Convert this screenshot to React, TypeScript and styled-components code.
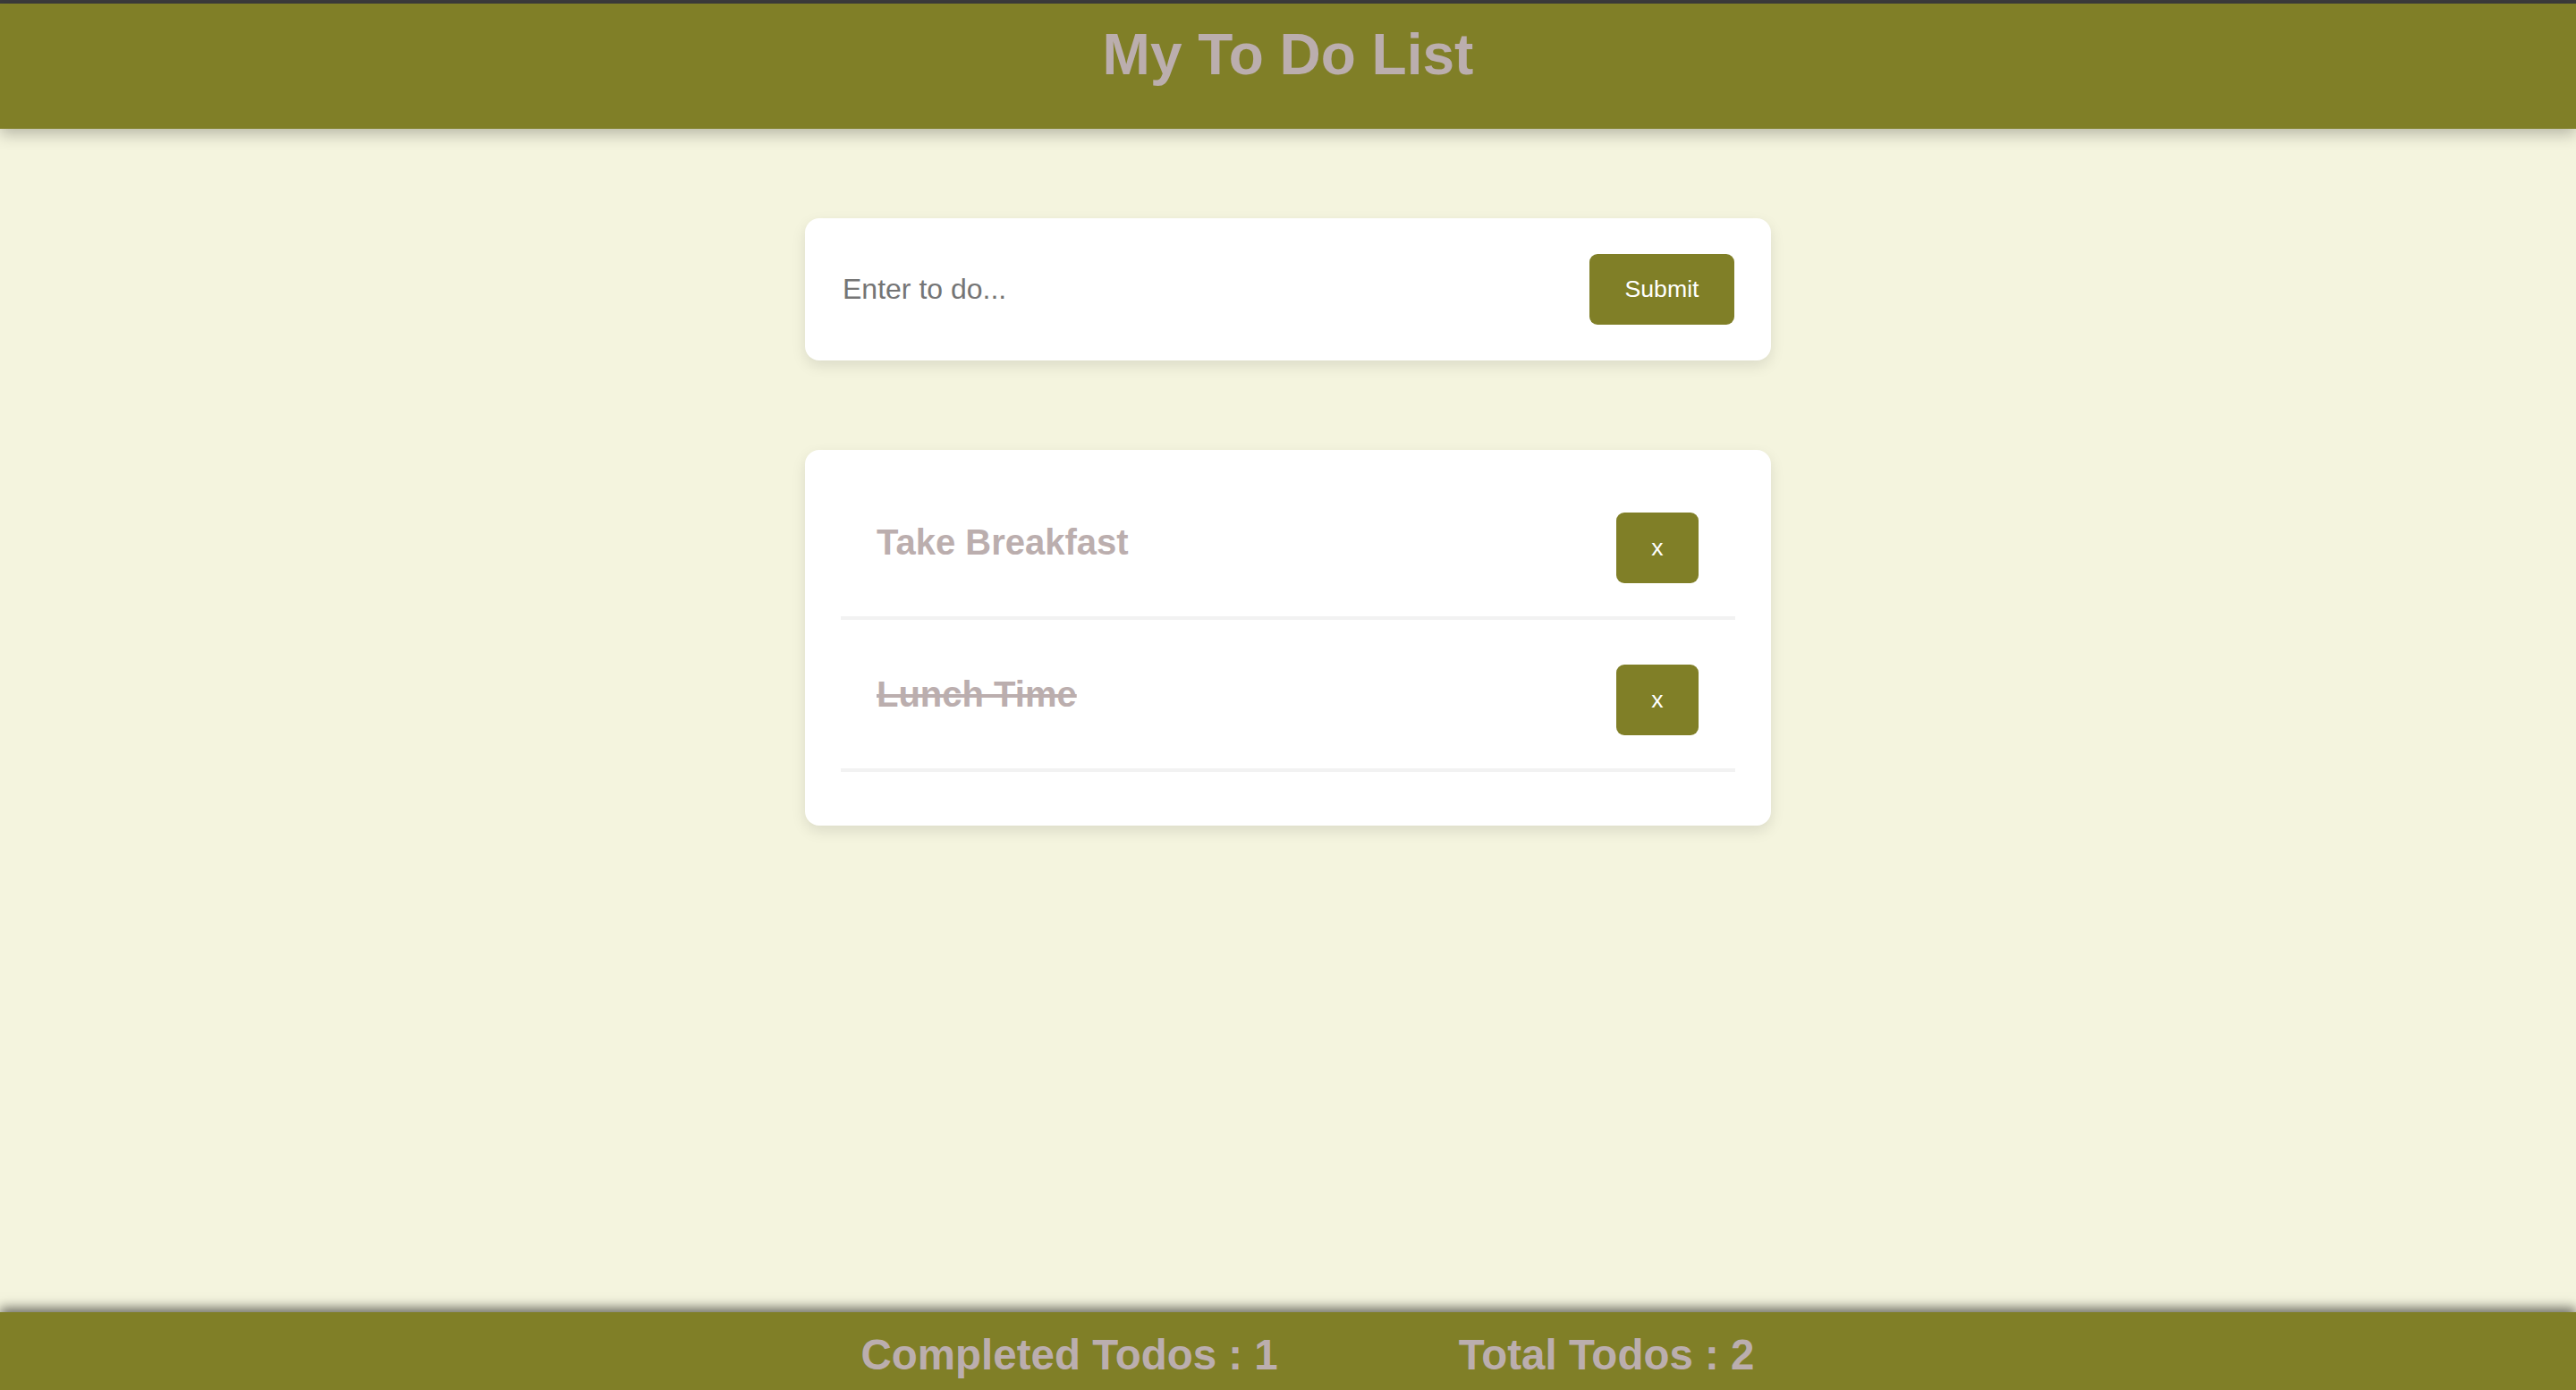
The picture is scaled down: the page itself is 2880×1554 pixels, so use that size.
import React from "react";
import styled, { createGlobalStyle } from "styled-components";

const GlobalStyle = createGlobalStyle`
  html, body {
    margin: 0;
    padding: 0;
    background: #f4f4de;
    font-family: "Liberation Sans", Arial, Helvetica, sans-serif;
  }
  * { box-sizing: border-box; }
`;

const olive = "#807f27";
const muted = "#bbaeae";

const Page = styled.div`
  min-height: 1554px;
  display: flex;
  flex-direction: column;
  border-top: 4px solid #3c3c3c;
  background: #f4f4de;
`;

const Header = styled.header`
  height: 140px;
  background: ${olive};
  display: flex;
  justify-content: center;
  align-items: flex-start;
  padding-top: 20px;
  box-shadow: 0 6px 16px rgba(0, 0, 0, 0.25);
  position: relative;
  z-index: 1;
`;

const Title = styled.h1`
  margin: 0;
  font-size: 64px;
  line-height: 74px;
  font-weight: 700;
  color: ${muted};
`;

const Main = styled.main`
  flex: 1;
  display: flex;
  flex-direction: column;
  align-items: center;
  gap: 100px;
  padding-top: 100px;
`;

const Card = styled.div`
  width: 1080px;
  background: #ffffff;
  border-radius: 16px;
  box-shadow: 0 6px 16px rgba(0, 0, 0, 0.1);
`;

const FormCard = styled(Card).attrs({ as: "form" })`
  display: flex;
  align-items: center;
  justify-content: space-between;
  padding: 40px 41px 40px 42px;
`;

const Input = styled.input`
  flex: 1;
  border: none;
  outline: none;
  background: transparent;
  font-family: "Liberation Sans", Arial, sans-serif;
  font-size: 32px;
  color: #333;
  padding: 0;
  &::placeholder {
    color: #757575;
  }
`;

const Button = styled.button<{ $wide?: boolean }>`
  border: none;
  border-radius: 9px;
  background: ${olive};
  color: #ffffff;
  font-family: "Liberation Sans", Arial, sans-serif;
  font-size: 26.67px;
  line-height: 31px;
  height: 79px;
  width: ${(p) => (p.$wide ? "162px" : "92px")};
  padding: 0;
  cursor: pointer;
`;

const ListCard = styled(Card)`
  padding: 20px 40px 60px;
`;

const List = styled.ul`
  list-style: none;
  margin: 0;
  padding: 0;
`;

const Item = styled.li`
  display: flex;
  justify-content: space-between;
  align-items: flex-start;
  padding: 50px 41px 37px 40px;
  border-bottom: 4px solid #f2f2f2;
`;

const ItemText = styled.h3<{ $done?: boolean }>`
  margin: 10px 0 0;
  font-size: 40px;
  line-height: 46px;
  font-weight: 700;
  color: ${muted};
  text-decoration: ${(p) => (p.$done ? "line-through" : "none")};
  text-decoration-thickness: 4px;
`;

const Footer = styled.footer`
  height: 87px;
  background: ${olive};
  display: flex;
  justify-content: center;
  gap: 202px;
  padding: 21px 0 0 44px;
  box-shadow: 0 -5px 12px rgba(0, 0, 0, 0.55);
  position: relative;
  z-index: 1;
`;

const Stat = styled.h2`
  margin: 0;
  font-size: 47.5px;
  line-height: 54px;
  font-weight: 700;
  color: ${muted};
`;

const todos = [
  { id: 1, text: "Take Breakfast", done: false },
  { id: 2, text: "Lunch Time", done: true },
];

export default function App() {
  const completed = todos.filter((t) => t.done).length;
  return (
    <>
      <GlobalStyle />
      <Page>
        <Header>
          <Title>My To Do List</Title>
        </Header>
        <Main>
          <FormCard onSubmit={(e: React.FormEvent) => e.preventDefault()}>
            <Input placeholder="Enter to do..." />
            <Button $wide type="submit">
              Submit
            </Button>
          </FormCard>
          <ListCard>
            <List>
              {todos.map((t) => (
                <Item key={t.id}>
                  <ItemText $done={t.done}>{t.text}</ItemText>
                  <Button type="button">x</Button>
                </Item>
              ))}
            </List>
          </ListCard>
        </Main>
        <Footer>
          <Stat>Completed Todos : {completed}</Stat>
          <Stat>Total Todos : {todos.length}</Stat>
        </Footer>
      </Page>
    </>
  );
}
